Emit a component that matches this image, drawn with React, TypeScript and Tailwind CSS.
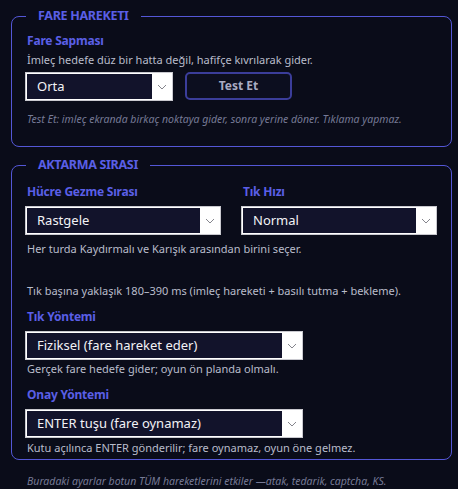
import React from 'react'

const font = { fontFamily: '"Noto Sans", "Open Sans", sans-serif' }

function FakeSelect({ value, className = '' }: { value: string; className?: string }) {
  return (
    <div className={`flex h-[29px] border border-[#c9c9cf] bg-white p-[1px] ${className}`}>
      <div className="flex flex-1 items-center bg-[#12132b] pl-[10px] text-[13px] text-[#f2f2f6]">{value}</div>
      <div className="flex w-[19px] items-center justify-center">
        <svg width="10" height="6" viewBox="0 0 10 6" fill="none">
          <path d="M1 1l4 4 4-4" stroke="#85858d" strokeWidth="1" />
        </svg>
      </div>
    </div>
  )
}

function Label({ children, className = '' }: { children: React.ReactNode; className?: string }) {
  return <div className={`pl-[2px] text-[12px] font-bold leading-[16px] tracking-[-0.2px] text-[#5a5fe6] ${className}`}>{children}</div>
}

function Hint({ children, className = '' }: { children: React.ReactNode; className?: string }) {
  return <div className={`whitespace-nowrap pl-[2px] text-[11px] leading-[15px] text-[#b9bccb] ${className}`}>{children}</div>
}

export default function App() {
  return (
    <div className="min-h-screen bg-[#0a0c19] pl-[11px] pr-[6px] pt-[8px]" style={font}>
      {/* Fare hareketi */}
      <fieldset className="rounded-[8px] border border-[#5457d6] pl-[13px] pr-[14px] pb-[19px]">
        <legend className="ml-[1px] px-3 text-[12.5px] font-bold leading-[16px] tracking-[-0.3px] text-[#5a5fe6]">FARE HAREKETI</legend>
        <div className="mt-[9px]">
          <Label>Fare Sapması</Label>
          <Hint className="mt-[3px]">İmleç hedefe düz bir hatta değil, hafifçe kıvrılarak gider.</Hint>
          <div className="mt-[5px] flex gap-3">
            <FakeSelect value="Orta" className="w-[148px]" />
            <button className="h-[28px] w-[107px] rounded-[5px] border-2 border-[#3b3d9a] bg-[#0c0e1f] text-[12px] font-bold text-[#a9abc2]">
              Test Et
            </button>
          </div>
          <div className="mt-[11px] pl-[2px] text-[10.5px] italic leading-[15px] text-[#767a96]">
            Test Et: imleç ekranda birkaç noktaya gider, sonra yerine döner. Tıklama yapmaz.
          </div>
        </div>
      </fieldset>

      {/* Aktarma sırası */}
      <fieldset className="mt-[10px] rounded-[8px] border border-[#5457d6] pl-[13px] pr-[14px] pb-[4px]">
        <legend className="ml-[1px] px-3 text-[12.5px] font-bold leading-[16px] tracking-[-0.3px] text-[#5a5fe6]">AKTARMA SIRASI</legend>
        <div className="mt-[11px] grid grid-cols-2 gap-x-5">
          <div>
            <Label>Hücre Gezme Sırası</Label>
            <FakeSelect value="Rastgele" className="mt-[6px]" />
          </div>
          <div>
            <Label>Tık Hızı</Label>
            <FakeSelect value="Normal" className="mt-[6px]" />
          </div>
        </div>
        <Hint className="mt-[6px]">Her turda Kaydırmalı ve Karışık arasından birini seçer.</Hint>
        <Hint className="mt-[27px]">Tık başına yaklaşık 180–390 ms (imleç hareketi + basılı tutma + bekleme).</Hint>
        <Label className="mt-[11px]">Tık Yöntemi</Label>
        <FakeSelect value="Fiziksel (fare hareket eder)" className="mt-[6px] w-[278px]" />
        <Hint className="mt-[1px]">Gerçek fare hedefe gider; oyun ön planda olmalı.</Hint>
        <Label className="mt-[11px]">Onay Yöntemi</Label>
        <FakeSelect value="ENTER tuşu (fare oynamaz)" className="mt-[6px] w-[278px]" />
        <Hint className="mt-[2px]">Kutu açılınca ENTER gönderilir; fare oynamaz, oyun öne gelmez.</Hint>
      </fieldset>

      <div className="mt-[14px] pl-[16px] text-[10.5px] italic leading-[15px] text-[#767a96]">
        Buradaki ayarlar botun TÜM hareketlerini etkiler —atak, tedarik, captcha, KS.
      </div>
    </div>
  )
}
